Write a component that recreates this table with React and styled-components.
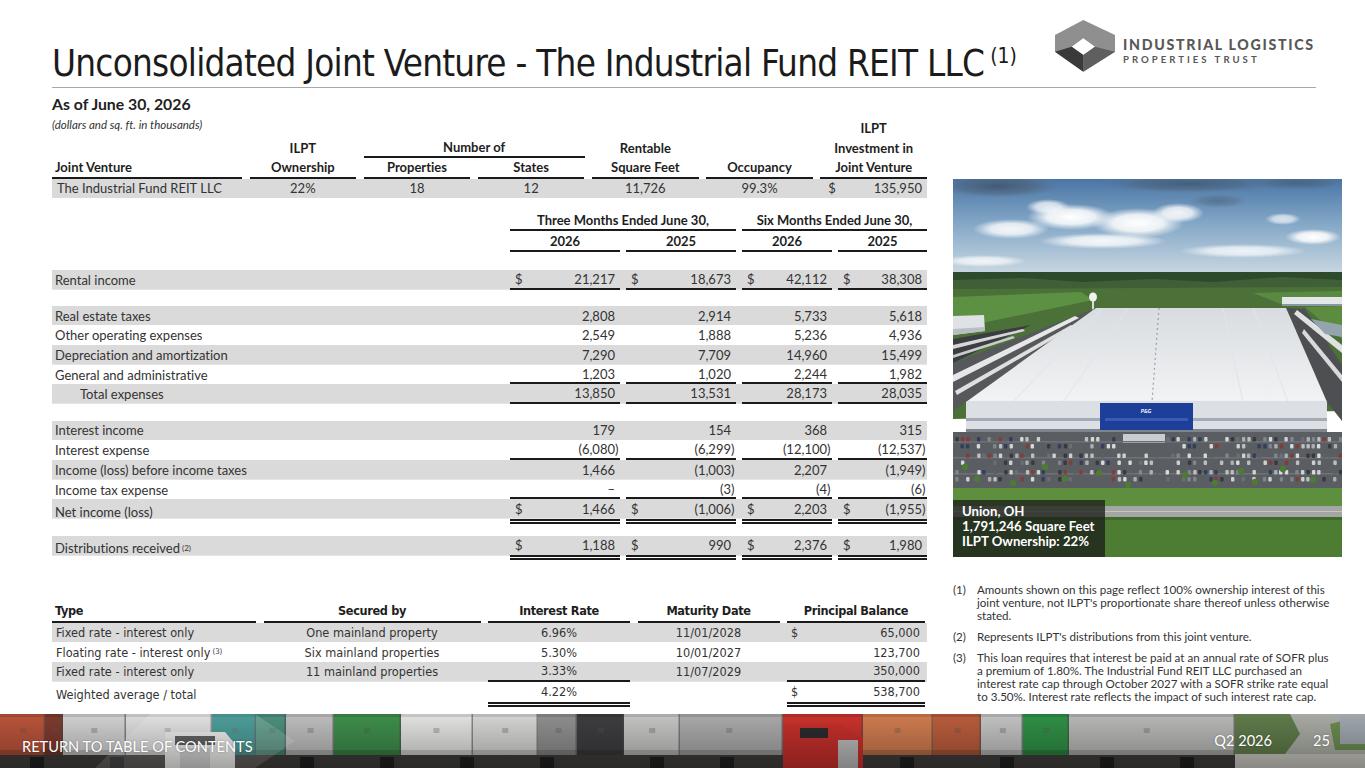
import React from 'react';
import styled, { createGlobalStyle } from 'styled-components';

const GlobalStyle = createGlobalStyle`
  html, body { margin: 0; padding: 0; background: #fff; }
  body { font-family: Lato, "Liberation Sans", sans-serif; color: #333; font-variant-ligatures: none; }
  * { box-sizing: border-box; }
`;

const NARROW = `"Liberation Sans Narrow", "DejaVu Sans Condensed", "Roboto Condensed", "Liberation Sans", sans-serif`;
const SHADE = '#dadada';
const INK = '#1a1a1a';

const Page = styled.div`
  width: 1365px;
  height: 768px;
  overflow: hidden;
  display: flex;
  flex-direction: column;
  background: #fff;
`;

const Header = styled.header`
  height: 88px;
  margin: 0 49px 0 52px;
  border-bottom: 1px solid #a8a8a8;
  display: flex;
  justify-content: space-between;
  align-items: flex-start;
`;

const Title = styled.h1`
  margin: 41px 0 0;
  font-family: ${NARROW};
  font-weight: 400;
  font-size: 36.5px;
  letter-spacing: -0.75px;
  line-height: 46px;
  color: #1b1b1b;
  white-space: nowrap;
`;

const TitleSup = styled.span`
  font-size: 21px;
  letter-spacing: 0;
  line-height: 0;
  vertical-align: 13px;
  margin-left: 6px;
`;

const Logo = styled.div`
  width: 266px;
  margin-top: 15px;
  display: flex;
  align-items: flex-start;
`;

const LogoText = styled.div`
  margin-left: 3px;
  padding-top: 23px;
  display: flex;
  flex-direction: column;
  color: #585858;
`;

const LogoMain = styled.span`
  font-family: Lato, "Liberation Sans", sans-serif;
  font-weight: 900;
  font-size: 14.2px;
  line-height: 14px;
  letter-spacing: 1.7px;
  white-space: nowrap;
`;

const LogoSub = styled.span`
  margin-top: 2.6px;
  font-family: Lato, "Liberation Sans", sans-serif;
  font-weight: 700;
  font-size: 9.6px;
  line-height: 10px;
  letter-spacing: 3px;
  white-space: nowrap;
`;

const Body = styled.div`
  height: 626px;
  padding: 7px 0 0 52px;
  display: flex;
`;

const LeftCol = styled.div`
  width: 875px;
  display: flex;
  flex-direction: column;
`;

const RightCol = styled.div`
  width: 389px;
  margin-left: 26px;
  padding-top: 84px;
  display: flex;
  flex-direction: column;
`;

const Subtitle = styled.div`
  font-weight: 700;
  font-size: 15.8px;
  line-height: 18px;
  color: #222;
`;

const Note = styled.div`
  font-style: italic;
  font-size: 11.5px;
  line-height: 13px;
  color: #333;
  align-self: start;
  white-space: nowrap;
`;

const Block = styled.div`
  display: flex;
  flex-direction: column;
  margin-top: ${p => p.$top || 0}px;
  font-family: ${p => (p.$narrow ? NARROW : 'Lato, "Liberation Sans", sans-serif')};
  font-size: ${p => (p.$narrow ? '12.6px' : '13px')};
`;

const Grid = styled.div`
  display: grid;
  grid-template-columns: ${p => p.$cols};
  column-gap: ${p => p.$gap}px;
  height: ${p => p.$h}px;
  flex: none;
  background: ${p =>
    p.$shade ? `linear-gradient(${SHADE}, ${SHADE}) top left / 100% ${p.$bg}px no-repeat` : 'none'};
`;

const Spacer = styled.div`
  height: ${p => p.$h}px;
  flex: none;
`;

const lineStyle = l =>
  l === 'single' ? `2px solid ${INK}` : l === 'double' ? `5px double ${INK}` : 'none';

const HeadCell = styled.div`
  grid-column: ${p => p.$span || 'auto'};
  display: flex;
  align-items: center;
  justify-content: ${p => (p.$left ? 'flex-start' : 'center')};
  padding-left: ${p => (p.$left ? '3px' : '0')};
  font-weight: 700;
  color: #1e1e1e;
  white-space: nowrap;
  letter-spacing: ${p => (p.$tight ? '-0.35px' : '0')};
  border-bottom: ${p => lineStyle(p.$line)};
`;

const TextCell = styled.div`
  display: flex;
  align-items: center;
  justify-content: ${p => (p.$center ? 'center' : 'flex-start')};
  padding-left: ${p => (p.$center ? 0 : p.$indent || 4)}px;
  white-space: nowrap;
  color: #333;
  border-bottom: ${p => lineStyle(p.$line)};
`;

const NumWrap = styled.div`
  display: flex;
  justify-content: space-between;
  align-items: center;
  padding-left: ${p => p.$pad || 5}px;
  white-space: nowrap;
  color: #333;
  border-bottom: ${p => lineStyle(p.$line)};
`;

const Paren = styled.span`
  display: inline-block;
  width: 5px;
`;

const Sup = styled.sup`
  font-size: 0.62em;
  line-height: 0;
  vertical-align: 0.55em;
  margin-left: 2px;
`;

const Num = ({ value, dollar, line, pad }) => {
  const neg = value.startsWith('(');
  return (
    <NumWrap $line={line} $pad={pad}>
      <span>{dollar ? '$' : ''}</span>
      <span>
        {neg ? value.slice(0, -1) : value}
        <Paren>{neg ? ')' : ''}</Paren>
      </span>
    </NumWrap>
  );
};

/* ---------- Table 1 ---------- */
const T1COLS = '190px repeat(6, 1fr)';
const T1GAP = 7.5;

const JointVentureTable = () => (
  <Block $top={5}>
    <Grid $cols={T1COLS} $gap={T1GAP} $h={20}>
      <Note>(dollars and sq. ft. in thousands)</Note>
      <span />
      <span />
      <span />
      <span />
      <span />
      <HeadCell>ILPT</HeadCell>
    </Grid>
    <Grid $cols={T1COLS} $gap={T1GAP} $h={20}>
      <span />
      <HeadCell>ILPT</HeadCell>
      <HeadCell $span="span 2" $line="single">Number of</HeadCell>
      <HeadCell>Rentable</HeadCell>
      <span />
      <HeadCell>Investment in</HeadCell>
    </Grid>
    <Grid $cols={T1COLS} $gap={T1GAP} $h={20.5}>
      <HeadCell $left $line="single">Joint Venture</HeadCell>
      <HeadCell $line="single">Ownership</HeadCell>
      <HeadCell $line="single">Properties</HeadCell>
      <HeadCell $line="single">States</HeadCell>
      <HeadCell $line="single">Square Feet</HeadCell>
      <HeadCell $line="single">Occupancy</HeadCell>
      <HeadCell $line="single">Joint Venture</HeadCell>
    </Grid>
    <Grid $cols={T1COLS} $gap={T1GAP} $h={19.5} $shade $bg={19.5}>
      <TextCell $indent={5}>The Industrial Fund REIT LLC</TextCell>
      <TextCell $center>22%</TextCell>
      <TextCell $center>18</TextCell>
      <TextCell $center>12</TextCell>
      <TextCell $center>11,726</TextCell>
      <TextCell $center>99.3%</TextCell>
      <Num value="135,950" dollar pad={8} />
    </Grid>
  </Block>
);

/* ---------- Table 2 ---------- */
const T2COLS = '452px 110px 110px 90px 89px';
const T2GAP = 6;
const RH = 19.7;

const incomeRows = [
  { label: 'Rental income', vals: ['21,217', '18,673', '42,112', '38,308'], dollar: true, shade: true, line: 'single' },
  { gap: 16 },
  { label: 'Real estate taxes', vals: ['2,808', '2,914', '5,733', '5,618'], shade: true },
  { label: 'Other operating expenses', vals: ['2,549', '1,888', '5,236', '4,936'] },
  { label: 'Depreciation and amortization', vals: ['7,290', '7,709', '14,960', '15,499'], shade: true },
  { label: 'General and administrative', vals: ['1,203', '1,020', '2,244', '1,982'], line: 'single' },
  { label: 'Total expenses', vals: ['13,850', '13,531', '28,173', '28,035'], shade: true, line: 'single', indent: 28 },
  { gap: 16.5 },
  { label: 'Interest income', vals: ['179', '154', '368', '315'], shade: true },
  { label: 'Interest expense', vals: ['(6,080)', '(6,299)', '(12,100)', '(12,537)'], line: 'single' },
  { label: 'Income (loss) before income taxes', vals: ['1,466', '(1,003)', '2,207', '(1,949)'], shade: true },
  { label: 'Income tax expense', vals: ['\u2013', '(3)', '(4)', '(6)'], line: 'single' },
  { label: 'Net income (loss)', vals: ['1,466', '(1,006)', '2,203', '(1,955)'], dollar: true, shade: true, line: 'double' },
  { gap: 11.5 },
  { label: 'Distributions received', sup: '(2)', vals: ['1,188', '990', '2,376', '1,980'], dollar: true, shade: true, line: 'double' },
];

const IncomeTable = () => (
  <Block $top={12}>
    <Grid $cols={T2COLS} $gap={T2GAP} $h={21}>
      <span />
      <HeadCell $span="span 2" $line="single">Three Months Ended June 30,</HeadCell>
      <HeadCell $span="span 2" $line="single">Six Months Ended June 30,</HeadCell>
    </Grid>
    <Grid $cols={T2COLS} $gap={T2GAP} $h={21}>
      <span />
      <HeadCell $line="single">2026</HeadCell>
      <HeadCell $line="single">2025</HeadCell>
      <HeadCell $line="single">2026</HeadCell>
      <HeadCell $line="single">2025</HeadCell>
    </Grid>
    <Spacer $h={18} />
    {incomeRows.map((r, i) =>
      r.gap ? (
        <Spacer key={i} $h={r.gap} />
      ) : (
        <Grid
          key={i}
          $cols={T2COLS}
          $gap={T2GAP}
          $h={r.line === 'double' ? RH + 5 : RH}
          $shade={r.shade}
          $bg={RH}
        >
          <TextCell $indent={r.indent || 3}>
            {r.label}
            {r.sup && <Sup>{r.sup}</Sup>}
          </TextCell>
          {r.vals.map((v, j) => (
            <Num key={j} value={v} dollar={r.dollar} line={r.line} />
          ))}
        </Grid>
      )
    )}
  </Block>
);

/* ---------- Table 3 ---------- */
const T3COLS = '204px 217px 142px 142px 138px';
const T3GAP = 7.5;

const debtRows = [
  { type: 'Fixed rate - interest only', sec: 'One mainland property', rate: '6.96%', date: '11/01/2028', bal: '65,000', dollar: true, shade: true },
  { type: 'Floating rate - interest only', sup: '(3)', sec: 'Six mainland properties', rate: '5.30%', date: '10/01/2027', bal: '123,700' },
  { type: 'Fixed rate - interest only', sec: '11 mainland properties', rate: '3.33%', date: '11/07/2029', bal: '350,000', shade: true, line: 'single' },
  { type: 'Weighted average / total', sec: '', rate: '4.22%', date: '', bal: '538,700', dollar: true, line: 'double' },
];

const DebtTable = () => (
  <Block $top={40.5} $narrow>
    <Grid $cols={T3COLS} $gap={T3GAP} $h={22}>
      <HeadCell $left $tight $line="single">Type</HeadCell>
      <HeadCell $tight $line="single">Secured by</HeadCell>
      <HeadCell $tight $line="single">Interest Rate</HeadCell>
      <HeadCell $tight $line="single">Maturity Date</HeadCell>
      <HeadCell $tight $line="single">Principal Balance</HeadCell>
    </Grid>
    {debtRows.map((r, i) => (
      <Grid
        key={i}
        $cols={T3COLS}
        $gap={T3GAP}
        $h={r.line === 'double' ? RH + 5 : RH}
        $shade={r.shade}
        $bg={RH}
      >
        <TextCell $indent={4}>
          {r.type}
          {r.sup && <Sup>{r.sup}</Sup>}
        </TextCell>
        <TextCell $center>{r.sec}</TextCell>
        <TextCell $center $line={r.line}>{r.rate}</TextCell>
        <TextCell $center>{r.date}</TextCell>
        <Num value={r.bal} dollar={r.dollar} line={r.line} pad={4} />
      </Grid>
    ))}
  </Block>
);

/* ---------- Photo ---------- */
const PhotoFrame = styled.div`
  position: relative;
  width: 389px;
  height: 378px;
  flex: none;
  overflow: hidden;
  svg { display: block; }
`;

const Caption = styled.div`
  position: absolute;
  left: 0;
  bottom: 0;
  width: 152px;
  height: 57px;
  padding: 4px 0 0 9px;
  background: rgba(28, 32, 26, 0.78);
  color: #fff;
  font-weight: 700;
  font-size: 13.2px;
  line-height: 15px;
  white-space: nowrap;
`;

function makeRng(seed) {
  let s = seed;
  return () => {
    s = (s * 16807) % 2147483647;
    return (s - 1) / 2147483646;
  };
}

const CAR_COLORS = ['#e4e4e4', '#b9bdc1', '#878c93', '#30343b', '#8f3533', '#2a3a5c', '#cfcfcf', '#5b6067', '#eeeeee', '#6d7278'];
const cars = (() => {
  const rnd = makeRng(11);
  const out = [];
  const rows = [258, 265, 274.5, 281.5, 291, 298];
  rows.forEach(y => {
    for (let x = 2; x < 386; x += 5.4) {
      if (x > 168 && x < 212 && y < 270) continue;
      if (rnd() < 0.66) {
        out.push({ x: x + rnd() * 0.8, y, c: CAR_COLORS[Math.floor(rnd() * CAR_COLORS.length)] });
      }
    }
  });
  return out;
})();

const trees = [
  [24, 300], [60, 304], [112, 300], [175, 306], [232, 296], [288, 292], [302, 303], [330, 290], [360, 301], [12, 288],
  [92, 288], [146, 294], [262, 304],
];

const clouds = [
  [45, 7, 62, 12, 'dk', 0.8], [235, 5, 88, 9, 'dk', 0.7], [345, 4, 48, 7, 'dk', 0.55], [265, 22, 30, 7, 'dk', 0.45],
  [118, 38, 44, 13, 'wh', 1], [185, 44, 46, 15, 'wh', 1], [225, 34, 26, 10, 'wh', 0.9], [58, 50, 38, 10, 'wh', 0.9],
  [150, 62, 64, 8, 'wh', 0.9], [360, 58, 28, 8, 'wh', 1], [290, 72, 64, 7, 'wh', 0.8], [30, 82, 44, 6, 'wh', 0.8],
  [95, 28, 22, 8, 'wh', 0.8], [330, 40, 18, 6, 'wh', 0.7],
];

const PhotoArt = () => (
  <svg width="389" height="378" viewBox="0 0 389 378">
    <defs>
      <linearGradient id="ph-sky" x1="0" y1="0" x2="0" y2="1">
        <stop offset="0" stopColor="#4a76a6" />
        <stop offset="0.5" stopColor="#88abc9" />
        <stop offset="1" stopColor="#cbd8e2" />
      </linearGradient>
      <linearGradient id="ph-roof" x1="0" y1="0" x2="0" y2="1">
        <stop offset="0" stopColor="#d8dce0" />
        <stop offset="1" stopColor="#f2f3f4" />
      </linearGradient>
      <radialGradient id="ph-wh">
        <stop offset="0" stopColor="#ffffff" stopOpacity="1" />
        <stop offset="0.55" stopColor="#f7f9fa" stopOpacity="0.9" />
        <stop offset="1" stopColor="#eef2f5" stopOpacity="0" />
      </radialGradient>
      <radialGradient id="ph-dk">
        <stop offset="0" stopColor="#3f5266" stopOpacity="1" />
        <stop offset="0.6" stopColor="#4d6177" stopOpacity="0.7" />
        <stop offset="1" stopColor="#5d7088" stopOpacity="0" />
      </radialGradient>
    </defs>
    <rect width="389" height="96" fill="url(#ph-sky)" />
    {clouds.map(([cx, cy, rx, ry, t, o], i) => (
      <ellipse key={i} cx={cx} cy={cy} rx={rx} ry={ry} fill={`url(#ph-${t})`} opacity={o} />
    ))}
    {/* horizon */}
    <path d="M0 93 L389 93 L389 122 L0 122 Z" fill="#2e4a2d" />
    <path d="M0 101 L70 99 L130 103 L200 100 L260 103 L330 98 L389 101 L389 110 L0 112 Z" fill="#3f5f37" />
    <path d="M0 110 L389 108 L389 232 L0 240 Z" fill="#4b7139" />
    <path d="M0 118 L128 113 L140 121 L0 150 Z" fill="#5c9143" />
    <path d="M300 114 L389 112 L389 126 L330 126 Z" fill="#5a8a41" />
    {/* water tower */}
    <rect x="139" y="118" width="2" height="15" fill="#d8dadc" />
    <ellipse cx="140" cy="118" rx="4" ry="4.5" fill="#eef0f1" />
    {/* far right building */}
    <rect x="329" y="118" width="60" height="9" fill="#e4e7ea" />
    <rect x="329" y="125" width="60" height="2" fill="#8b96a3" />
    {/* left building */}
    <path d="M0 137 L31 136 L32 152 L0 156 Z" fill="#dfe2e5" />
    <path d="M0 150 L32 148 L32 152 L0 156 Z" fill="#b8bec4" />
    {/* left lots */}
    <path d="M0 160 L78 146 L0 184 Z" fill="#3b3d40" />
    <path d="M0 166 L70 150 L72 152 L0 170 Z" fill="#d4d6d8" />
    <path d="M0 176 L60 157 L62 159 L0 179 Z" fill="#c8cacc" />
    <path d="M0 184 L143 129 L13 223 L0 232 Z" fill="#56585c" />
    <path d="M0 196 L122 137 L126 139 L0 203 Z" fill="#e6e7e8" />
    <path d="M2 212 L118 146 L121 148 L4 216 Z" fill="#dedfe0" />
    {/* right lots */}
    <path d="M333 129 L352 130 L389 186 L389 242 L374 223 Z" fill="#4d4f53" />
    <path d="M344 131 L389 166 L389 174 L341 135 Z" fill="#e0e1e2" />
    <path d="M351 150 L389 196 L389 203 L349 154 Z" fill="#d9dadb" />
    <path d="M352 128 L389 127 L389 160 Z" fill="#5b8c40" />
    <path d="M358 140 L389 146 L389 158 L372 155 Z" fill="#94a4ad" />
    {/* main building roof */}
    <path d="M143 129 L333 129 L374 223 L13 223 Z" fill="url(#ph-roof)" />
    <path d="M206 129 L199 223" stroke="#9aa1a8" strokeWidth="1.2" strokeDasharray="2 3" />
    <path d="M175 129 L110 223 M270 129 L290 223 M300 129 L335 223 M150 129 L60 223" stroke="#e1e4e8" strokeWidth="1" />
    <path d="M13 223 L374 223" stroke="#c6cbd0" strokeWidth="1" />
    {/* facade */}
    <rect x="13" y="223" width="361" height="30" fill="#dcdfe3" />
    <rect x="13" y="239" width="361" height="3" fill="#a3acb5" />
    <rect x="13" y="250" width="361" height="3" fill="#7e858c" />
    <rect x="147" y="224" width="93" height="27" fill="#1e3f99" />
    <rect x="152" y="239" width="83" height="3" fill="#3a5bb3" />
    <text x="193" y="234" fill="#fff" fontSize="5.5" fontStyle="italic" fontWeight="700" textAnchor="middle" fontFamily="Lato, sans-serif">P&amp;G</text>
    <rect x="13" y="253" width="361" height="3" fill="#3d3f42" />
    {/* parking */}
    <rect x="0" y="253" width="389" height="58" fill="#5a5d61" />
    <rect x="170" y="255" width="42" height="9" fill="#c9cdd1" />
    {[262, 278, 294].map(y => (
      <rect key={y} x="0" y={y} width="389" height="1.5" fill="#6e7276" />
    ))}
    {cars.map((c, i) => (
      <rect key={i} x={c.x} y={c.y} width="3.4" height="4.4" rx="1" fill={c.c} opacity="0.85" />
    ))}
    {trees.map(([x, y], i) => (
      <circle key={i} cx={x} cy={y} r="3.2" fill="#4d7a34" />
    ))}
    {/* grass, road */}
    <rect x="0" y="309" width="389" height="18" fill="#5e8f3f" />
    <rect x="0" y="327" width="389" height="11" fill="#a4a6a4" />
    <rect x="0" y="332" width="389" height="1" fill="#c4c6c4" />
    <rect x="0" y="338" width="389" height="40" fill="#4d7d33" />
    <rect x="0" y="338" width="389" height="3" fill="#3f6a2a" />
  </svg>
);

/* ---------- Footnotes ---------- */
const Notes = styled.div`
  margin-top: 25.5px;
  display: flex;
  flex-direction: column;
  gap: 8px;
  font-size: 11.6px;
  line-height: 13px;
  color: #333;
`;

const NoteItem = styled.div`
  display: grid;
  grid-template-columns: 24px 1fr;
  white-space: nowrap;
`;

/* ---------- Footer strip ---------- */
const Strip = styled.footer`
  position: relative;
  height: 54px;
  flex: none;
  display: flex;
  align-items: center;
  padding: 0 0 0 22px;
  overflow: hidden;
  color: #fff;
  svg { position: absolute; left: 0; top: 0; }
`;

const StripText = styled.span`
  position: relative;
  font-size: 14.6px;
  line-height: 18px;
  margin-top: 12px;
  white-space: nowrap;
  text-shadow: 0 0 2px rgba(0, 0, 0, 0.35);
`;

const StripRight = styled.div`
  position: relative;
  margin-left: auto;
  margin-right: 35px;
  display: flex;
  gap: 41px;
  font-size: 14.6px;
  line-height: 18px;
  text-shadow: 0 0 2px rgba(0, 0, 0, 0.35);
`;

const segs = [
  [0, 45, '#b9533a'], [45, 63, '#7d3a2e'], [63, 126, '#cfd0cf'], [126, 212, '#dcdcdc'],
  [212, 256, '#2b8b86'], [256, 286, '#4d8f7d'], [286, 334, '#bdbdbd'], [334, 401, '#3e8d4b'],
  [401, 473, '#e2e2e0'], [473, 538, '#d4d4d2'], [538, 577, '#8e8e8e'], [577, 624, '#3d3d3f'],
  [624, 680, '#c4c4c2'], [680, 783, '#a9a9a9'], [783, 863, '#c9322d'], [863, 933, '#cf7b4f'],
  [933, 981, '#b95c3c'], [981, 1023, '#c2c2c2'], [1023, 1069, '#2f8f45'], [1069, 1235, '#b7b7b5'],
];

const StripArt = () => (
  <svg width="1365" height="54" viewBox="0 0 1365 54">
    <defs>
      <linearGradient id="st-shade" x1="0" y1="0" x2="0" y2="1">
        <stop offset="0" stopColor="#000" stopOpacity="0" />
        <stop offset="1" stopColor="#000" stopOpacity="0.3" />
      </linearGradient>
    </defs>
    <rect width="1365" height="54" fill="#6d6d6b" />
    {segs.map(([a, b, c], i) => (
      <g key={i}>
        <rect x={a} y="0" width={b - a} height="41" fill={c} />
        <rect x={a} y="0" width={b - a} height="3" fill="#000" opacity="0.12" />
        <rect x={a} y="36" width={b - a} height="5" fill="#000" opacity="0.15" />
        <rect x={b - 1.5} y="0" width="1.5" height="41" fill="#4a4a4a" opacity="0.6" />
        <rect x={a + (b - a) * 0.45} y="14" width="6" height="5" fill="#555" opacity="0.3" />
      </g>
    ))}
    {/* trees / background right */}
    <rect x="1235" y="0" width="130" height="54" fill="#a7aaa2" />
    <path d="M1235 0 L1290 0 L1300 20 L1285 40 L1235 40 Z" fill="#5f7a4a" />
    <path d="M1330 10 L1350 5 L1365 15 L1365 36 L1335 36 Z" fill="#6b8a4f" />
    <rect x="1340" y="0" width="25" height="30" fill="#9fa7ad" />
    <rect x="1235" y="40" width="130" height="14" fill="#c4c3bb" />
    {/* ground / undercarriage */}
    <rect x="0" y="41" width="1235" height="13" fill="#3c3b39" />
    {[30, 110, 200, 300, 380, 460, 540, 650, 720, 900, 1000, 1100, 1180].map(x => (
      <rect key={x} x={x} y="43" width="14" height="11" fill="#1f1f1f" />
    ))}
    {/* truck cabs */}
    <path d="M783 10 L840 10 L863 24 L863 54 L783 54 Z" fill="#c42f2b" />
    <rect x="800" y="14" width="28" height="10" fill="#2b2b2d" />
    <rect x="838" y="26" width="20" height="28" fill="#b9b9b9" />
    <path d="M165 18 L225 18 L235 30 L235 54 L165 54 Z" fill="#e8e8e6" />
    <rect x="175" y="22" width="40" height="9" fill="#444" />
    <rect x="180" y="34" width="30" height="20" fill="#c9c9c9" />
    {/* chevron overlay */}
    <path d="M95 54 L150 0 L255 0 L295 27 L255 54 Z" fill="#fff" opacity="0.16" />
    <rect width="1365" height="54" fill="url(#st-shade)" />
  </svg>
);

/* ---------- Logo mark ---------- */
const LogoMark = () => (
  <svg width="70" height="62" viewBox="0 0 70 62">
    <polygon points="33.3,5 65,20 65,36.7 33.3,56.7 5,36.7 5,20" fill="#8f8f8f" />
    <polygon points="33.3,23.3 45,31.7 33.3,40 21.7,31.7" fill="#ffffff" />
    <polygon points="5,36.7 21.7,31.7 33.3,40 33.3,56.7" fill="#3a3a3a" />
    <polygon points="33.3,40 45,31.7 65,36.7 33.3,56.7" fill="#5f5f5f" />
  </svg>
);

export default function App() {
  return (
    <Page>
      <GlobalStyle />
      <Header>
        <Title>
          Unconsolidated Joint Venture - The Industrial Fund REIT LLC<TitleSup>(1)</TitleSup>
        </Title>
        <Logo>
          <LogoMark />
          <LogoText>
            <LogoMain>INDUSTRIAL LOGISTICS</LogoMain>
            <LogoSub>PROPERTIES TRUST</LogoSub>
          </LogoText>
        </Logo>
      </Header>
      <Body>
        <LeftCol>
          <Subtitle>As of June 30, 2026</Subtitle>
          <JointVentureTable />
          <IncomeTable />
          <DebtTable />
        </LeftCol>
        <RightCol>
          <PhotoFrame>
            <PhotoArt />
            <Caption>
              Union, OH
              <br />
              1,791,246 Square Feet
              <br />
              ILPT Ownership: 22%
            </Caption>
          </PhotoFrame>
          <Notes>
            <NoteItem>
              <span>(1)</span>
              <span>
                Amounts shown on this page reflect 100% ownership interest of this
                <br />
                joint venture, not ILPT's proportionate share thereof unless otherwise
                <br />
                stated.
              </span>
            </NoteItem>
            <NoteItem>
              <span>(2)</span>
              <span>Represents ILPT's distributions from this joint venture.</span>
            </NoteItem>
            <NoteItem>
              <span>(3)</span>
              <span>
                This loan requires that interest be paid at an annual rate of SOFR plus
                <br />
                a premium of 1.80%. The Industrial Fund REIT LLC purchased an
                <br />
                interest rate cap through October 2027 with a SOFR strike rate equal
                <br />
                to 3.50%. Interest rate reflects the impact of such interest rate cap.
              </span>
            </NoteItem>
          </Notes>
        </RightCol>
      </Body>
      <Strip>
        <StripArt />
        <StripText>RETURN TO TABLE OF CONTENTS</StripText>
        <StripRight>
          <span>Q2 2026</span>
          <span>25</span>
        </StripRight>
      </Strip>
    </Page>
  );
}
